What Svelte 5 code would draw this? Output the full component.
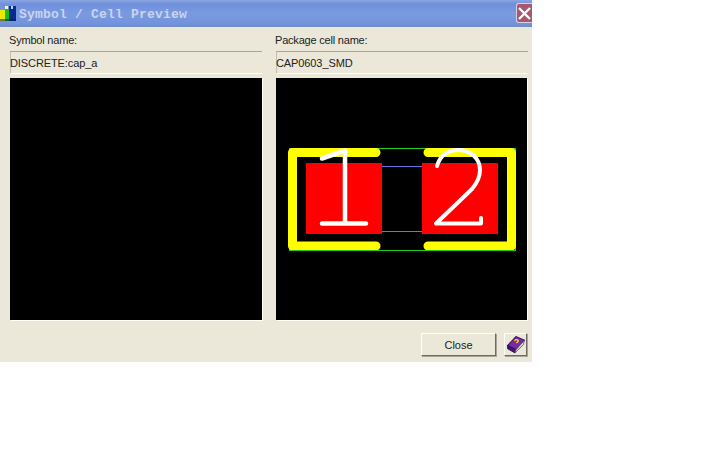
<script>
  const panels = [
    { label: 'Symbol name:', value: 'DISCRETE:cap_a', cell: false },
    { label: 'Package cell name:', value: 'CAP0603_SMD', cell: true }
  ];
</script>

<div class="window">
  <header class="titlebar">
    <svg class="appicon" width="19" height="15" viewBox="0 0 19 15">
      <rect x="0" y="4" width="5" height="11" fill="#e8e800" />
      <rect x="5" y="3" width="4" height="12" fill="#10c020" />
      <rect x="9" y="0" width="7" height="15" fill="#0a2a90" />
      <rect x="5" y="0" width="3" height="3" fill="#f4f4d0" />
      <rect x="11" y="0" width="2" height="3" fill="#c0d0f0" />
      <rect x="0" y="13" width="16" height="2" fill="#10184a" opacity="0.55" />
    </svg>
    <span class="title">Symbol / Cell Preview</span>
    <span class="close">
      <svg width="15" height="15" viewBox="0 0 15 15">
        <path d="M2 2 L13 13 M13 2 L2 13" stroke="#fff" stroke-width="2.4" />
      </svg>
    </span>
  </header>

  <main class="content">
    {#each panels as p}
      <section class="panel">
        <div class="label">{p.label}</div>
        <div class="field">{p.value}</div>
        <div class="canvas">
          {#if p.cell}
            <svg width="251" height="242" viewBox="276 78 251 242">
              <rect x="289.500" y="148.500" width="226" height="102" fill="none" stroke="#22cc22" stroke-width="1" />
              <rect x="306" y="163" width="76" height="71" fill="#ff0000" />
              <rect x="422" y="163" width="76" height="71" fill="#ff0000" />
              <path d="M382 166.500H422M382 231.500H422" stroke="#6a70e8" stroke-width="1" />
              <path d="M376 152.500H292.500V246H376M428 152.500H511.500V246H428" fill="none" stroke="#ffff00" stroke-width="9" stroke-linecap="round" stroke-linejoin="round" />
              <path d="M289 250.500H516" stroke="#22cc22" stroke-width="1" />
              <path d="M322 158.500L345 150.500V223.500M322 223.500H366" fill="none" stroke="#fff" stroke-width="4.500" stroke-linecap="round" stroke-linejoin="round" />
              <path d="M437 166C440 155 449 150 458 150C470 150 480 158 480 170C480 178 477 183 472 189L436 223.500H481V218" fill="none" stroke="#fff" stroke-width="4" stroke-linecap="round" stroke-linejoin="round" />
            </svg>
          {/if}
        </div>
      </section>
    {/each}
  </main>

  <footer class="actions">
    <button class="btn">Close</button>
    <button class="btn help" aria-label="Help">
      <svg width="20" height="19" viewBox="0 0 18 18">
        <path d="M1 10 L9 1.500 L17 5 L9 14 Z" fill="#7a2aa8" stroke="#3a1060" stroke-width="1" />
        <path d="M1 10 L1 13 L8 17 L9 14 Z" fill="#4a1478" stroke="#2a0a50" stroke-width="0.800" />
        <path d="M9 14 L8 17 L16 9 L17 5 Z" fill="#e8e4d8" stroke="#5a4a70" stroke-width="0.800" />
        <path d="M7.500 5.500 Q9.500 3.500 11 5 Q11.500 6.500 9.300 7.500" fill="none" stroke="#f8d820" stroke-width="1.300" />
      </svg>
    </button>
  </footer>
</div>

<style>
  :global(body) {
    margin: 0;
    background: #fff;
  }

  .window {
    width: 532px;
    height: 362px;
    background: #ebe8d9;
    display: flex;
    flex-direction: column;
    font-family: "Liberation Sans", Arial, sans-serif;
    overflow: hidden;
  }

  .titlebar {
    height: 27px;
    flex: none;
    box-sizing: border-box;
    display: flex;
    align-items: center;
    background: linear-gradient(to bottom, #8aa6e0 0, #7090dc 4px, #7a9ae0 14px, #7392dd 24px, #6f8cc8 27px);
  }

  .appicon {
    flex: none;
  }

  .title {
    margin-top: 2px;
    flex: 1;
    font: bold 13px/1 "Liberation Mono", monospace;
    letter-spacing: 0.2px;
    color: #c8d4ee;
  }

  .close {
    width: 16px;
    height: 20px;
    margin-top: -1px;
    box-sizing: border-box;
    border: 1px solid #d8d0e0;
    border-right: 0;
    border-radius: 3px 0 0 3px;
    background: #a9566f;
    display: flex;
    align-items: center;
    justify-content: center;
    overflow: hidden;
  }

  .content {
    display: flex;
    gap: 14px;
    padding: 7px 4px 0 10px;
  }

  .panel {
    width: 252px;
  }

  .label {
    font-size: 11px;
    line-height: 13px;
    height: 17px;
    color: #222;
    letter-spacing: -0.2px;
    text-indent: -1px;
  }

  .field {
    box-sizing: border-box;
    height: 23px;
    border-top: 1px solid #a8a598;
    border-left: 1px solid #c2bfb0;
    border-bottom: 1px solid #fffff8;
    font-size: 11px;
    line-height: 22px;
    color: #222;
    white-space: nowrap;
    letter-spacing: -0.1px;
    text-indent: -1px;
  }

  .canvas {
    margin-top: 4px;
    width: 251px;
    height: 242px;
    background: #000;
    box-shadow: 1px 1px 0 #fffff6;
  }

  .panel:first-child .canvas {
    width: 252px;
  }

  .canvas svg {
    display: block;
  }

  .actions {
    display: flex;
    justify-content: flex-end;
    gap: 8px;
    padding: 13px 5px 0 0;
  }

  .btn {
    box-sizing: border-box;
    width: 75px;
    height: 23px;
    padding: 0;
    font: 11px "Liberation Sans", Arial, sans-serif;
    color: #222;
    background: #ebe8d9;
    border: 1px solid;
    border-color: #fffff8 #6e6c62 #6e6c62 #fffff8;
    box-shadow: 1px 1px 0 #a8a598;
  }

  .help {
    width: 23px;
    display: flex;
    align-items: center;
    justify-content: center;
  }
</style>
